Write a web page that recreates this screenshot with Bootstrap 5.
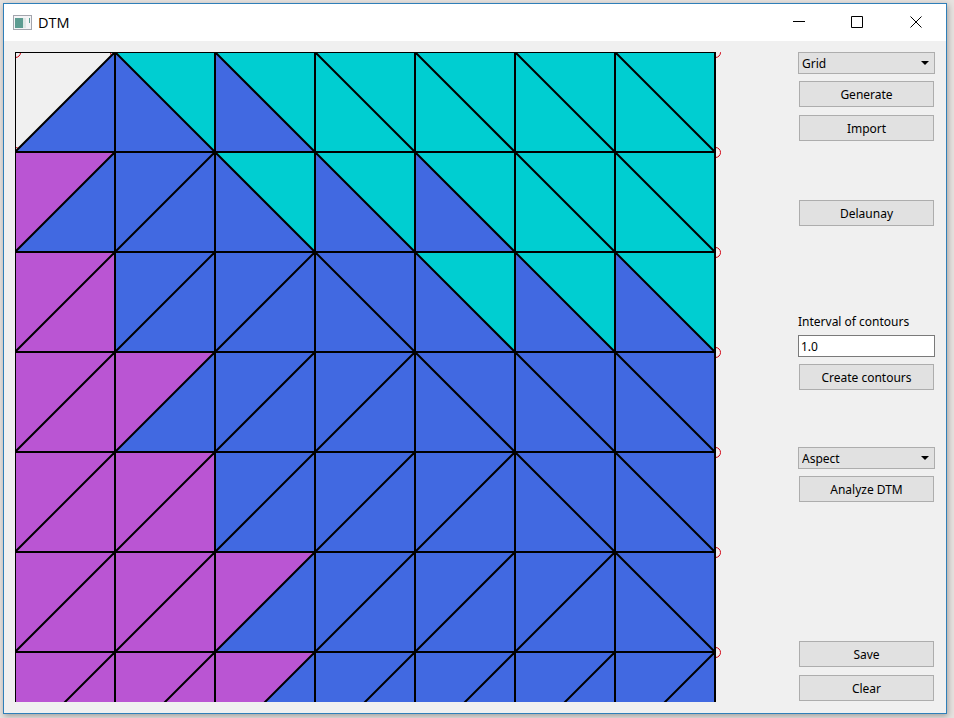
<!DOCTYPE html>
<html lang="en">
<head>
<meta charset="utf-8">
<title>DTM</title>
<link href="https://cdn.jsdelivr.net/npm/bootstrap@5.3.0/dist/css/bootstrap.min.css" rel="stylesheet">
<style>
html,body{height:100%}
body{background:#e6e2df;font-family:"Noto Sans","Open Sans",sans-serif;font-size:12px;line-height:16px;color:#000;overflow:hidden;padding:3px 7px 4px 3px}
.win{background:#f0f0f0;border:1px solid #2f7fb9;box-shadow:1px 2px 6px rgba(0,0,0,.3)}
.titlebar{height:37px;background:#fff;padding-left:9px}
.caption{font-family:"Open Sans","Noto Sans",sans-serif;font-size:14.5px;line-height:20px;margin-left:6px}
.work{padding:11px}
.panel{width:137px}
.panel .btn,.panel .form-select,.panel .form-control{font-size:12px;line-height:16px;border-radius:0;color:#000;box-shadow:none}
.panel .btn{height:26px;margin-left:1px;margin-right:1px;padding:5px 0 3px;background:#e1e1e1;border:1px solid #adadad}
.panel .form-select{height:22px;padding:3px 20px 1px 3px;border:1px solid #adadad;background:#e1e1e1 url("data:image/svg+xml,%3Csvg xmlns='http://www.w3.org/2000/svg' width='8' height='4'%3E%3Cpath d='M0 0h8L4 4z'/%3E%3C/svg%3E") no-repeat right 5px top 8px/8px 4px}
.panel .form-control{height:22px;padding:2px;border:1px solid #7a7a7a;background:#fff}
.panel .gap-select{margin-top:7px}
.panel .gap-button{margin-top:8px}
.panel .sec-a{margin-top:59px}
.panel .sec-b{margin-top:88px}
.panel .sec-c{margin-top:57px}
.panel .last{margin-bottom:1px}
.lbl{height:16px;margin-bottom:5px}
</style>
</head>
<body>
<div class="win h-100 d-flex flex-column">
  <header class="titlebar d-flex align-items-center flex-shrink-0">
    <svg width="19" height="15"><rect x=".5" y=".5" width="18" height="14" fill="#f4f4f6" stroke="#a3a5ad"/><rect x="2" y="3" width="8" height="10" fill="#5d9c91"/><rect x="10" y="3" width="3" height="10" fill="#dfe8e6"/><rect x="16" y="3" width="1" height="5" fill="#5d9c91"/></svg>
    <span class="caption">DTM</span>
    <svg class="ms-auto" width="153" height="37" fill="none" stroke="#000"><path d="M0 17.5h12M58.500 12.500h11v11h-11zM117.500 12.500l11 11M128.500 12.500l-11 11"/></svg>
  </header>
  <main class="work d-flex justify-content-between flex-grow-1">
    <svg id="dtm" width="706" height="650" viewBox="15 52 706 650" role="img" aria-label="Terrain aspect"></svg>
    <aside class="panel d-flex flex-column">
      <select class="form-select"><option>Grid</option></select>
      <button class="btn gap-select">Generate</button>
      <button class="btn gap-button">Import</button>
      <button class="btn sec-a">Delaunay</button>
      <label class="lbl sec-b" for="iv">Interval of contours</label>
      <input class="form-control" id="iv" value="1.0">
      <button class="btn gap-select">Create contours</button>
      <select class="form-select sec-c"><option>Aspect</option></select>
      <button class="btn gap-select">Analyze DTM</button>
      <button class="btn mt-auto">Save</button>
      <button class="btn gap-button last">Clear</button>
    </aside>
  </main>
</div>
<script src="https://cdn.jsdelivr.net/npm/bootstrap@5.3.0/dist/js/bootstrap.bundle.min.js"></script>
<script>
// Two letters per cell: colour left of the diagonal, then colour right of it.
const rows = ["nb bc bc cc cc cc cc","pb bb bc bc bc cc cc","pp bb bb bb bc bc bc","pp pb bb bb bb bb bb","pp pp bb bb bb bb bb","pp pp pb bb bb bb bb","pp pp pb bb bb bb bb"];
const fill = {n:"none", b:"#4169e1", c:"#00ced1", p:"#ba55d3"};
let circles = "", faces = "", edges = "";
for (let r = 0; r < 7; r++) for (let c = 0; c < 8; c++)
  circles += `<circle cx="${c*100+15.5}" cy="${r*100+52.5}" r="5" fill="none" stroke="#d00010"/>`;
rows.forEach((row, r) => row.split(" ").forEach((k, c) => {
  const x = 15 + c*100, y = 52 + r*100, X = x + 100, Y = y + 100, up = c <= r;
  const a = up ? `${x},${y} ${X},${y} ${x},${Y}` : `${x},${y} ${x},${Y} ${X},${Y}`;
  const b = up ? `${X},${y} ${X},${Y} ${x},${Y}` : `${x},${y} ${X},${y} ${X},${Y}`;
  faces += `<polygon points="${a}" fill="${fill[k[0]]}"/><polygon points="${b}" fill="${fill[k[1]]}"/>`;
  edges += `M${x} ${y}H${X}V${Y}M${x} ${y}V${Y}` + (up ? `M${X} ${y}L${x} ${Y}` : `M${x} ${y}L${X} ${Y}`);
}));
document.getElementById("dtm").innerHTML = circles + faces + `<path d="${edges}" fill="none" stroke="#000" stroke-width="2"/>`;
</script>
</body>
</html>
